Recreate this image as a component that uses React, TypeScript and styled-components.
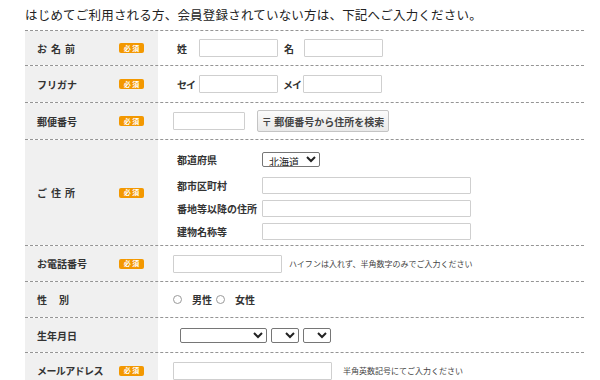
import styled, { createGlobalStyle } from 'styled-components';

const GlobalStyle = createGlobalStyle`
  body {
    margin: 0;
    background: #fff;
    font-family: "Noto Sans CJK JP", "Noto Sans", sans-serif;
    color: #333;
  }
`;

const prefectures = ['北海道', '青森県', '岩手県', '宮城県'];

function Badge() {
  return <BadgeStyle>必 須</BadgeStyle>;
}

function App() {
  return (
    <>
      <GlobalStyle />
      <Page>
        <Title>はじめてご利用される方、会員登録されていない方は、下記へご入力ください。</Title>
        <FormTable>
          <Row $h={35}>
            <LabelCell>
              <LabelText $ls={4}>お名前</LabelText>
              <Badge />
            </LabelCell>
            <FieldCell $pl={19}>
              <SubLabel $w={22}>姓</SubLabel>
              <TextInput $w={79} />
              <SubLabel $w={20} $ml={6}>名</SubLabel>
              <TextInput $w={79} />
            </FieldCell>
          </Row>
          <Row $h={37}>
            <LabelCell>
              <LabelText>フリガナ</LabelText>
              <Badge />
            </LabelCell>
            <FieldCell $pl={19}>
              <SubLabel $w={22} $tight>セイ</SubLabel>
              <TextInput $w={79} />
              <SubLabel $w={20} $ml={5} $tight>メイ</SubLabel>
              <TextInput $w={79} />
            </FieldCell>
          </Row>
          <Row $h={37}>
            <LabelCell>
              <LabelText>郵便番号</LabelText>
              <Badge />
            </LabelCell>
            <FieldCell>
              <TextInput $w={72} />
              <SearchButton type="button">〒 郵便番号から住所を検索</SearchButton>
            </FieldCell>
          </Row>
          <Row $h={106}>
            <LabelCell>
              <LabelText $ls={4}>ご住所</LabelText>
              <Badge />
            </LabelCell>
            <FieldCell $pl={19}>
              <AddressGrid>
                <SubLabel>都道府県</SubLabel>
                <div>
                  <Select $w={58} defaultValue="北海道">
                    {prefectures.map((p) => (
                      <option key={p}>{p}</option>
                    ))}
                  </Select>
                </div>
                <SubLabel>都市区町村</SubLabel>
                <TextInput $w={209} $h={17} />
                <SubLabel>番地等以降の住所</SubLabel>
                <TextInput $w={209} $h={17} />
                <SubLabel>建物名称等</SubLabel>
                <TextInput $w={209} $h={17} />
              </AddressGrid>
            </FieldCell>
          </Row>
          <Row $h={36}>
            <LabelCell>
              <LabelText>お電話番号</LabelText>
              <Badge />
            </LabelCell>
            <FieldCell>
              <TextInput $w={109} />
              <Note>ハイフンは入れず、半角数字のみでご入力ください</Note>
            </FieldCell>
          </Row>
          <Row $h={36}>
            <LabelCell>
              <LabelText $ls={12}>性別</LabelText>
            </LabelCell>
            <FieldCell>
              <RadioLabel>
                <Radio type="radio" name="sex" />
                男性
              </RadioLabel>
              <RadioLabel>
                <Radio type="radio" name="sex" />
                女性
              </RadioLabel>
            </FieldCell>
          </Row>
          <Row $h={35}>
            <LabelCell>
              <LabelText>生年月日</LabelText>
            </LabelCell>
            <FieldCell $pl={22}>
              <Select $w={87} defaultValue="">
                <option value=""></option>
              </Select>
              <Select $w={28} $ml={4} defaultValue="">
                <option value=""></option>
              </Select>
              <Select $w={28} $ml={4} defaultValue="">
                <option value=""></option>
              </Select>
            </FieldCell>
          </Row>
          <Row $h={36}>
            <LabelCell>
              <LabelText $tight>メールアドレス</LabelText>
              <Badge />
            </LabelCell>
            <FieldCell>
              <TextInput $w={159} />
              <Note $ml={11}>半角英数記号にてご入力ください</Note>
            </FieldCell>
          </Row>
        </FormTable>
      </Page>
    </>
  );
}

export default App;

const Page = styled.div`
  width: 600px;
  height: 380px;
  overflow: hidden;
  padding: 0 16px 0 25px;
  box-sizing: border-box;
`;

const Title = styled.h1`
  margin: 0;
  height: 30px;
  line-height: 30px;
  font-size: 12.5px;
  font-weight: normal;
  letter-spacing: 0.2px;
  color: #222;
  white-space: nowrap;
`;

const FormTable = styled.div`
  width: 559px;
`;

const Row = styled.div<{ $h: number }>`
  display: grid;
  grid-template-columns: 133px 1fr;
  height: ${(p) => p.$h}px;
  border-top: 1px dashed #959595;
  box-sizing: border-box;
`;

const LabelCell = styled.div`
  display: flex;
  align-items: center;
  padding-left: 12px;
  background: #f0f0f0;
`;

const LabelText = styled.span<{ $ls?: number; $tight?: boolean }>`
  width: 82px;
  font-size: 10px;
  font-weight: bold;
  letter-spacing: ${(p) => (p.$tight ? -0.6 : p.$ls ?? 0)}px;
  white-space: nowrap;
  color: #333;
`;

const BadgeStyle = styled.span`
  display: inline-flex;
  align-items: center;
  justify-content: center;
  width: 25px;
  height: 10px;
  border-radius: 2px;
  background: #f39800;
  color: #fff;
  font-size: 7px;
  font-weight: bold;
  line-height: 1;
`;

const FieldCell = styled.div<{ $pl?: number }>`
  display: flex;
  align-items: center;
  padding-left: ${(p) => p.$pl ?? 15}px;
`;

const SubLabel = styled.span<{ $w?: number; $ml?: number; $tight?: boolean }>`
  ${(p) => (p.$w ? `width: ${p.$w}px;` : '')}
  margin-left: ${(p) => p.$ml ?? 0}px;
  font-size: 10px;
  font-weight: bold;
  letter-spacing: ${(p) => (p.$tight ? -1 : 0)}px;
  color: #333;
  white-space: nowrap;
`;

const TextInput = styled.input<{ $w: number; $h?: number }>`
  width: ${(p) => p.$w}px;
  height: ${(p) => p.$h ?? 18}px;
  box-sizing: border-box;
  border: 1px solid #cfcfcf;
  border-radius: 1px;
  background: #fff;
  padding: 0 3px;
  margin: 0;
`;

const SearchButton = styled.button`
  margin-left: 12px;
  width: 132px;
  height: 22px;
  box-sizing: border-box;
  border: 1px solid #c4c4c4;
  border-radius: 2px;
  background: linear-gradient(#fbfbfb, #e9e9e9);
  font-family: inherit;
  font-size: 10px;
  font-weight: bold;
  color: #444;
  padding: 0;
`;

const AddressGrid = styled.div`
  display: grid;
  grid-template-columns: 85px auto;
  align-items: center;
  row-gap: 6px;
  margin-top: 2px;
`;

const Select = styled.select<{ $w: number; $ml?: number }>`
  width: ${(p) => p.$w}px;
  height: 15px;
  margin: 0 0 0 ${(p) => p.$ml ?? 0}px;
  box-sizing: border-box;
  border: 1px solid #767676;
  border-radius: 2px;
  background: #fff;
  font-family: inherit;
  font-size: 10px;
  padding: 0 0 0 2px;
  color: #222;
`;

const Note = styled.span<{ $ml?: number }>`
  margin-left: ${(p) => p.$ml ?? 7}px;
  font-size: 8px;
  color: #444;
  white-space: nowrap;
`;

const RadioLabel = styled.label`
  display: inline-flex;
  align-items: center;
  margin-right: 4px;
  font-size: 10px;
  font-weight: bold;
  color: #333;
`;

const Radio = styled.input`
  appearance: none;
  width: 9px;
  height: 9px;
  margin: 0 10px 0 0;
  border: 1px solid #9a9a9a;
  border-radius: 50%;
  background: #fff;
`;
